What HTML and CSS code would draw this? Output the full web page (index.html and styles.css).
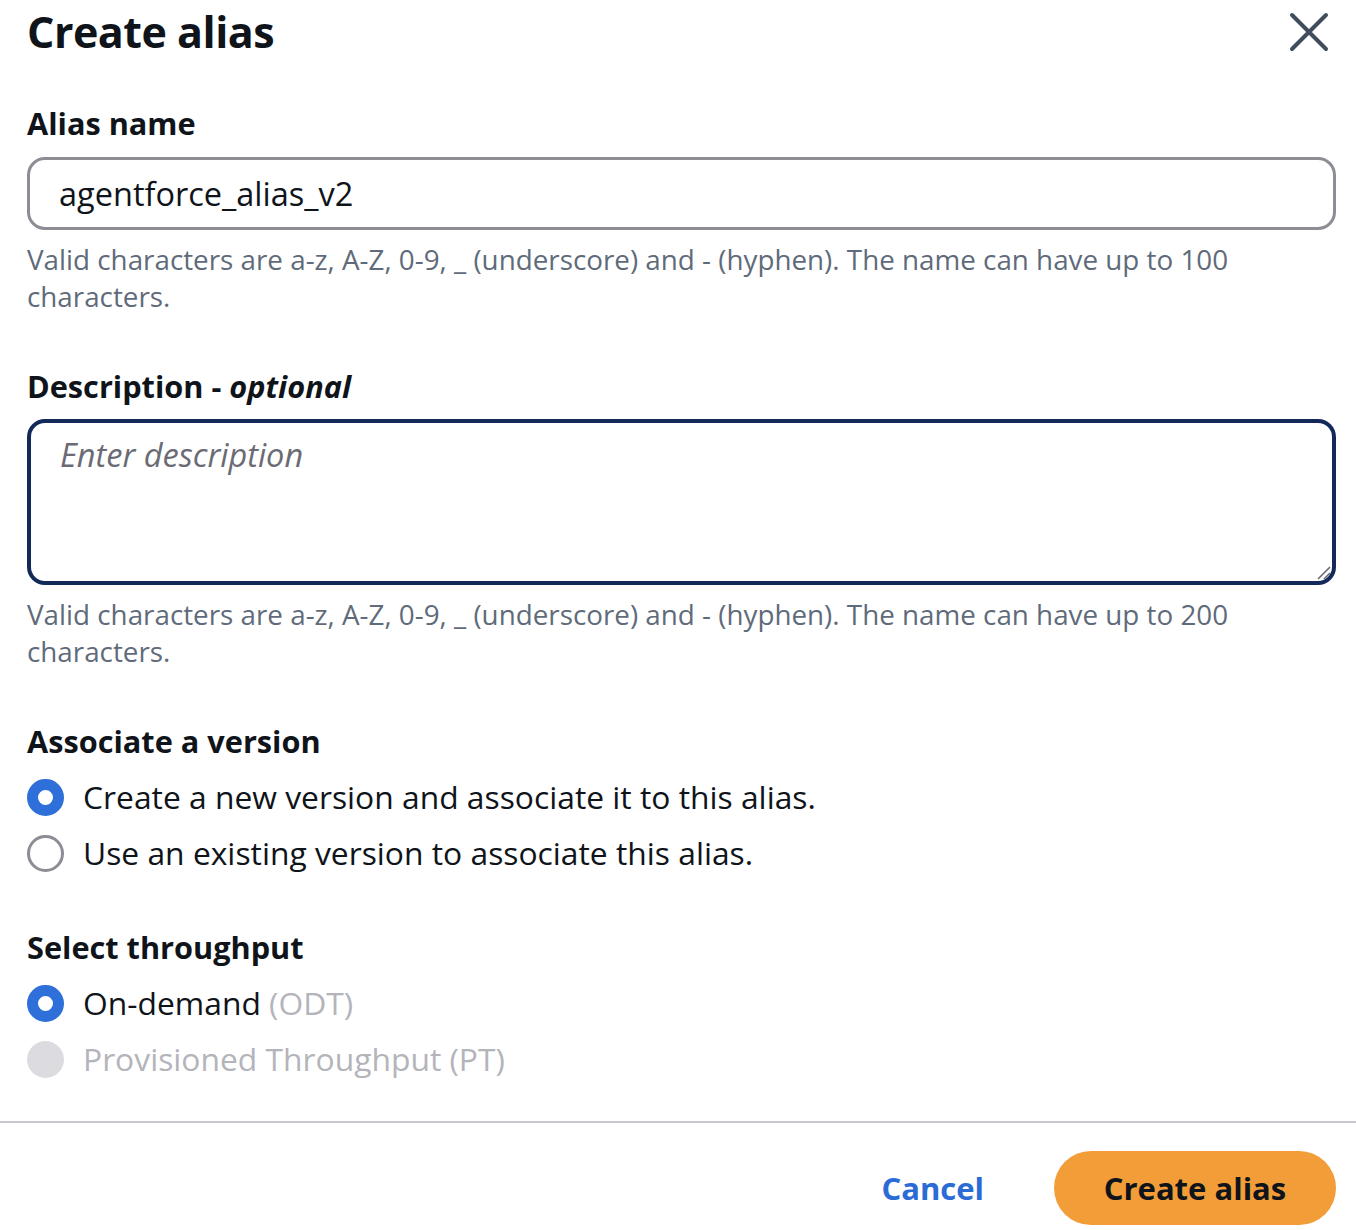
FILE: index.html
```html
<!DOCTYPE html>
<html lang="en">
<head>
<meta charset="utf-8">
<title>Create alias</title>
<link rel="stylesheet" href="styles.css">
</head>
<body>
<div class="modal">
  <div class="modal-body">
    <header class="modal-header">
      <h1 class="title">Create alias</h1>
      <button class="close" aria-label="Close">
        <svg width="40" height="40" viewBox="0 0 40 40"><path d="M3 3 L37 37 M37 3 L3 37" stroke="#414d5c" stroke-width="4" stroke-linecap="round" fill="none"/></svg>
      </button>
    </header>

    <section class="field">
      <label class="label">Alias name</label>
      <input class="input" type="text" value="agentforce_alias_v2" readonly>
      <p class="hint">Valid characters are a-z, A-Z, 0-9, _ (underscore) and - (hyphen). The name can have up to 100 characters.</p>
    </section>

    <section class="field">
      <label class="label">Description - <i>optional</i></label>
      <div class="textarea-wrap">
        <textarea class="textarea" placeholder="Enter description"></textarea>
        <svg class="grip" width="16" height="16" viewBox="0 0 16 16"><path d="M15 3 L3 15 M15 9 L9 15" stroke="#6b6b75" stroke-width="1.6" fill="none"/></svg>
      </div>
      <p class="hint">Valid characters are a-z, A-Z, 0-9, _ (underscore) and - (hyphen). The name can have up to 200 characters.</p>
    </section>

    <section class="field">
      <div class="label">Associate a version</div>
      <div class="radios">
        <div class="radio-row"><span class="radio checked"></span><span class="rtext">Create a new version and associate it to this alias.</span></div>
        <div class="radio-row"><span class="radio"></span><span class="rtext">Use an existing version to associate this alias.</span></div>
      </div>
    </section>

    <section class="field field-tight">
      <div class="label">Select throughput</div>
      <div class="radios">
        <div class="radio-row"><span class="radio checked"></span><span class="rtext">On-demand <span class="muted">(ODT)</span></span></div>
        <div class="radio-row"><span class="radio disabled"></span><span class="rtext muted">Provisioned Throughput (PT)</span></div>
      </div>
    </section>
  </div>

  <footer class="modal-footer">
    <button class="btn-link">Cancel</button>
    <button class="btn-primary">Create alias</button>
  </footer>
</div>
</body>
</html>
```

FILE: styles.css
```css
* { box-sizing: border-box; }

html, body {
  margin: 0;
  padding: 0;
  background: #ffffff;
}

body {
  font-family: "Open Sans", "Noto Sans", sans-serif;
  color: #0f141a;
  width: 1356px;
  height: 1230px;
  overflow: hidden;
}

.modal-body {
  padding: 0 20px 0 27px;
}

.modal-header {
  display: flex;
  justify-content: space-between;
  align-items: center;
  height: 64px;
}

.title {
  margin: 0;
  font-size: 43px;
  line-height: 64px;
  font-weight: 700;
  color: #0f141a;
  letter-spacing: -0.5px;
}

.close {
  border: 0;
  background: transparent;
  padding: 0;
  width: 40px;
  height: 40px;
  margin-right: 7px;
  display: flex;
  align-items: center;
  justify-content: center;
}

.field {
  margin-top: 39px;
  display: flex;
  flex-direction: column;
}

.field + .field {
  margin-top: 51px;
}

.field + .field-tight {
  margin-top: 46px;
}

.label {
  display: block;
  font-size: 30.7px;
  line-height: 40px;
  font-weight: 700;
  color: #0f141a;
}

.label i {
  font-weight: 700;
}

.input {
  margin-top: 14px;
  width: 1309px;
  height: 73px;
  border: 3px solid #8d8d96;
  border-radius: 18px;
  padding: 0 29px;
  font-family: inherit;
  font-size: 32.5px;
  color: #0f141a;
  outline: none;
}

.textarea-wrap {
  position: relative;
  margin-top: 13px;
  width: 1309px;
  height: 166px;
}

.textarea {
  display: block;
  width: 100%;
  height: 100%;
  border: 4px solid #12295a;
  border-radius: 18px;
  padding: 9px 29px;
  font-family: inherit;
  font-size: 32.5px;
  line-height: 46px;
  color: #0f141a;
  outline: none;
  resize: none;
}

.textarea::placeholder {
  color: #6b6b75;
  font-style: italic;
}

.grip {
  position: absolute;
  right: 5px;
  bottom: 5px;
}

.hint {
  margin: 11px 0 0;
  font-size: 27.8px;
  line-height: 37px;
  color: #5f6b7a;
}

.radios {
  margin-top: 8px;
  display: flex;
  flex-direction: column;
}

.radio-row {
  display: flex;
  align-items: center;
  height: 56px;
  gap: 19px;
}

.radio {
  width: 37px;
  height: 37px;
  border-radius: 50%;
  border: 3px solid #8d8d96;
  flex: none;
  background: #fff;
}

.radio.checked {
  border: 11.5px solid #2f6fd9;
}

.radio.disabled {
  border: 0;
  background: #dcdce0;
}

.rtext {
  font-size: 31.8px;
  line-height: 40px;
  color: #0f141a;
}

.muted {
  color: #b4b4bb;
}

.modal-footer {
  margin-top: 34px;
  border-top: 2px solid #c6c6cd;
  display: flex;
  justify-content: flex-end;
  align-items: center;
  gap: 70px;
  padding: 28px 20px 0 0;
}

.btn-link {
  border: 0;
  background: transparent;
  font-family: inherit;
  font-size: 31px;
  font-weight: 700;
  color: #2b6bd6;
  padding: 0;
}

.btn-primary {
  border: 0;
  background: #f29d38;
  color: #0f141a;
  font-family: inherit;
  font-size: 31px;
  font-weight: 700;
  width: 282px;
  height: 74px;
  border-radius: 37px;
}
```
